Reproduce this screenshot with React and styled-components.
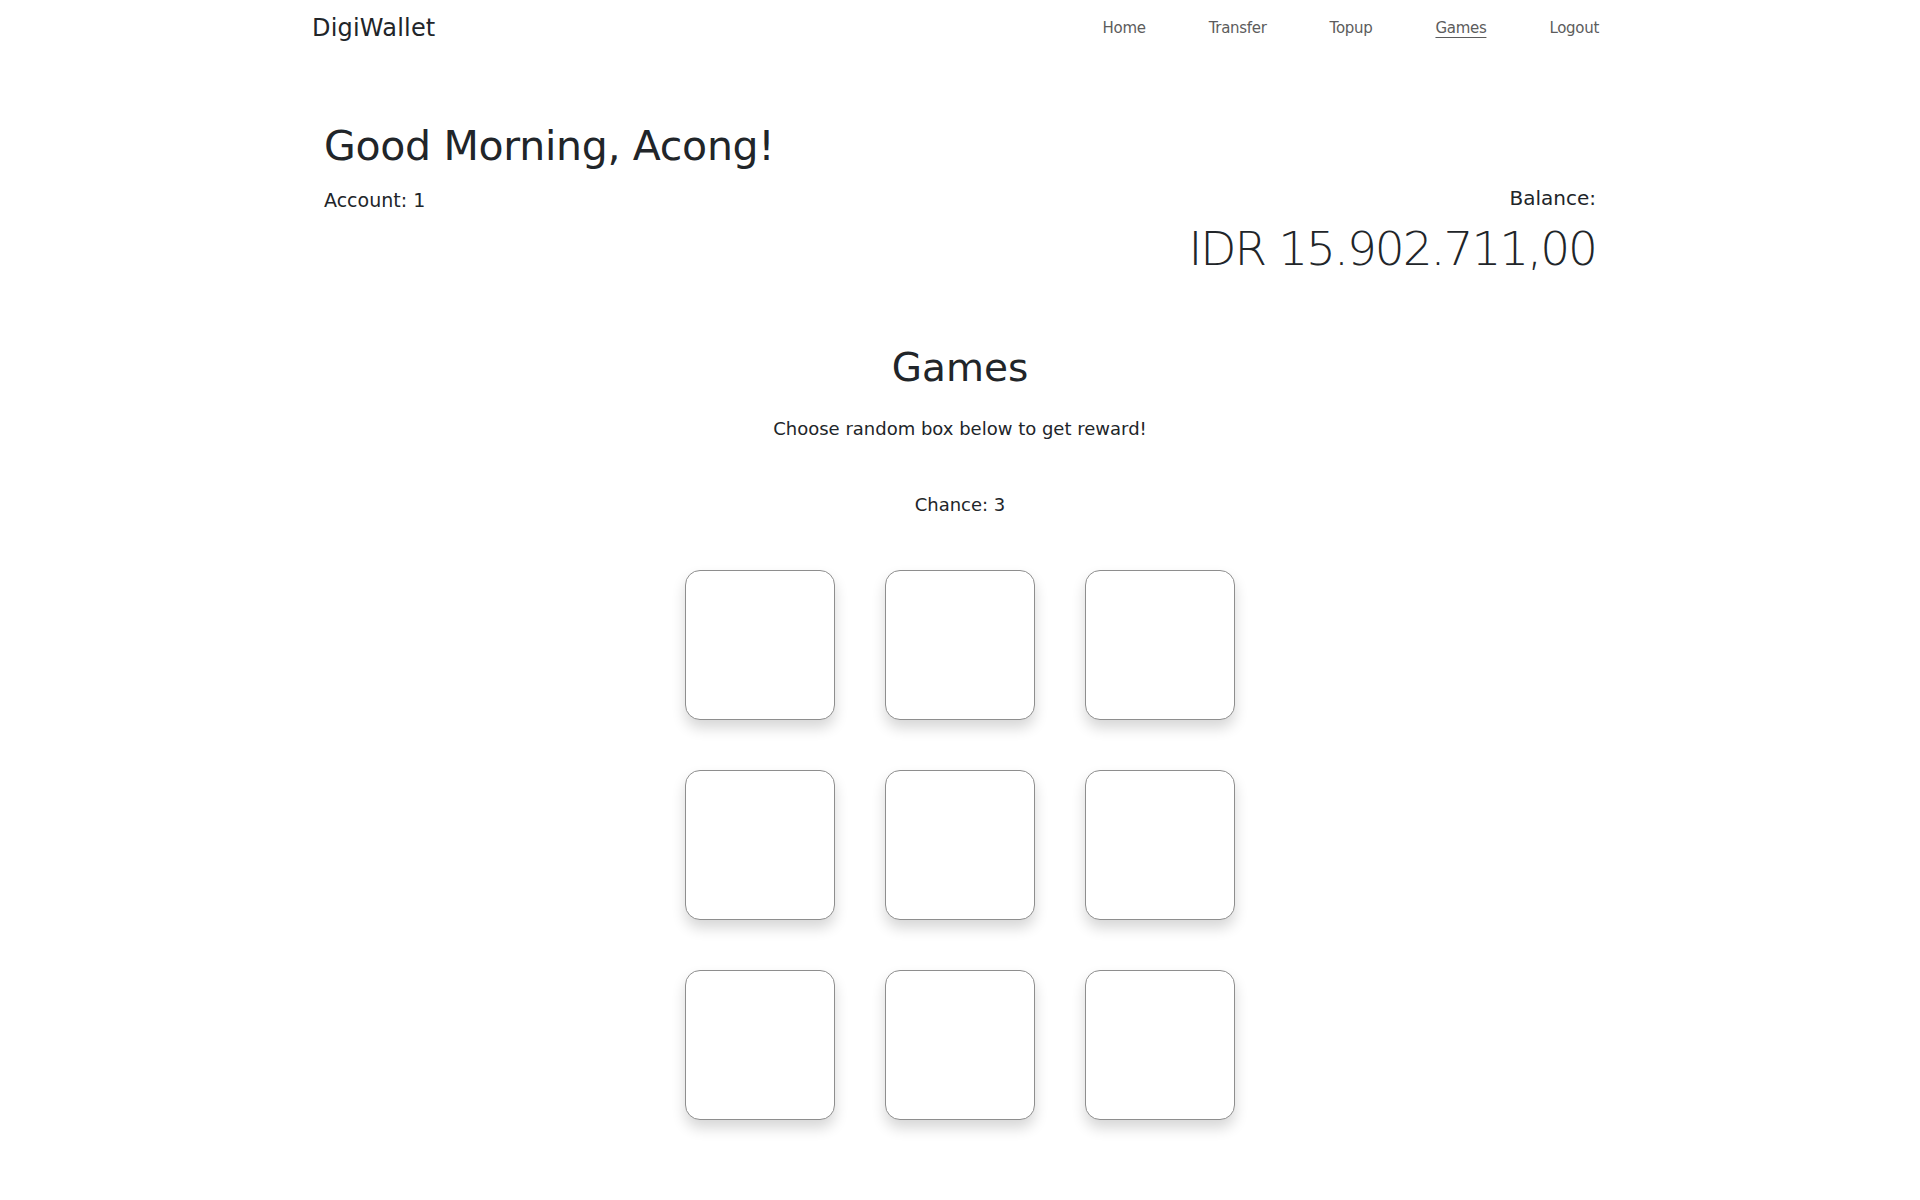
import styled, { createGlobalStyle } from "styled-components";

const Global = createGlobalStyle`
	body {
		margin: 0;
		background: #fff;
		color: #212529;
		font-family: "DejaVu Sans", "Noto Sans", sans-serif;
	}
	* {
		box-sizing: border-box;
	}
`;

const Nav = styled.nav`
	display: flex;
	align-items: center;
	justify-content: space-between;
	width: 1296px;
	height: 56px;
	margin: 0 auto;

	.brand {
		font-size: 24px;
		color: #212529;
		letter-spacing: 0.2px;
	}

	ul {
		display: flex;
		list-style: none;
		margin: 0 9px 0 0;
		padding: 0;
		gap: 63px;
	}
`;

const NavLink = styled.li`
	font-size: 15px;
	color: #5c5c5c;
	text-decoration: ${(p) => (p.$active ? "underline" : "none")};
	text-underline-offset: 4px;
	letter-spacing: -0.3px;
`;

const Main = styled.main`
	width: 1272px;
	margin: 0 auto;
`;

const Header = styled.section`
	display: flex;
	justify-content: space-between;
	align-items: flex-start;
	padding-top: 66px;

	h1 {
		margin: 0;
		font-size: 41px;
		font-weight: 400;
		line-height: 1.2;
		letter-spacing: -0.3px;
	}

	p {
		margin: 18px 0 0;
		font-size: 19px;
	}

	.right {
		text-align: right;
		padding-top: 64px;

		p {
			margin: 0;
			font-size: 20px;
		}
	}

	.right .amount {
		margin: 11px 0 0;
		font-size: 47px;
		font-weight: 300;
		line-height: 1.2;
		letter-spacing: -2px;
	}
`;

const Games = styled.section`
	display: flex;
	flex-direction: column;
	align-items: center;
	padding-top: 68px;

	h2 {
		margin: 0;
		font-size: 39px;
		font-weight: 400;
		line-height: 1.2;
	}

	.sub {
		margin: 26px 0 0;
		font-size: 18px;
	}

	.chance {
		margin: 55px 0 0;
		font-size: 18px;
	}
`;

const Grid = styled.div`
	display: grid;
	grid-template-columns: repeat(3, 150px);
	grid-auto-rows: 150px;
	gap: 50px;
	margin-top: 55px;
	padding-bottom: 79px;
`;

const Box = styled.button`
	background: #fff;
	border: 1px solid #8e8e8e;
	border-radius: 15px;
	box-shadow: 0 8px 14px rgba(0, 0, 0, 0.16);
	cursor: pointer;
	padding: 0;
`;

const links = ["Home", "Transfer", "Topup", "Games", "Logout"];

const App = () => {
	return (
		<>
			<Global />
			<Nav>
				<span className="brand">DigiWallet</span>
				<ul>
					{links.map((l) => (
						<NavLink key={l} $active={l === "Games"}>
							{l}
						</NavLink>
					))}
				</ul>
			</Nav>
			<Main>
				<Header>
					<div>
						<h1>Good Morning, Acong!</h1>
						<p>Account: 1</p>
					</div>
					<div className="right">
						<p>Balance:</p>
						<p className="amount">IDR 15.902.711,00</p>
					</div>
				</Header>
				<Games>
					<h2>Games</h2>
					<p className="sub">Choose random box below to get reward!</p>
					<p className="chance">Chance: 3</p>
					<Grid>
						{Array.from({ length: 9 }).map((_, i) => (
							<Box key={i} />
						))}
					</Grid>
				</Games>
			</Main>
		</>
	);
};

export default App;
